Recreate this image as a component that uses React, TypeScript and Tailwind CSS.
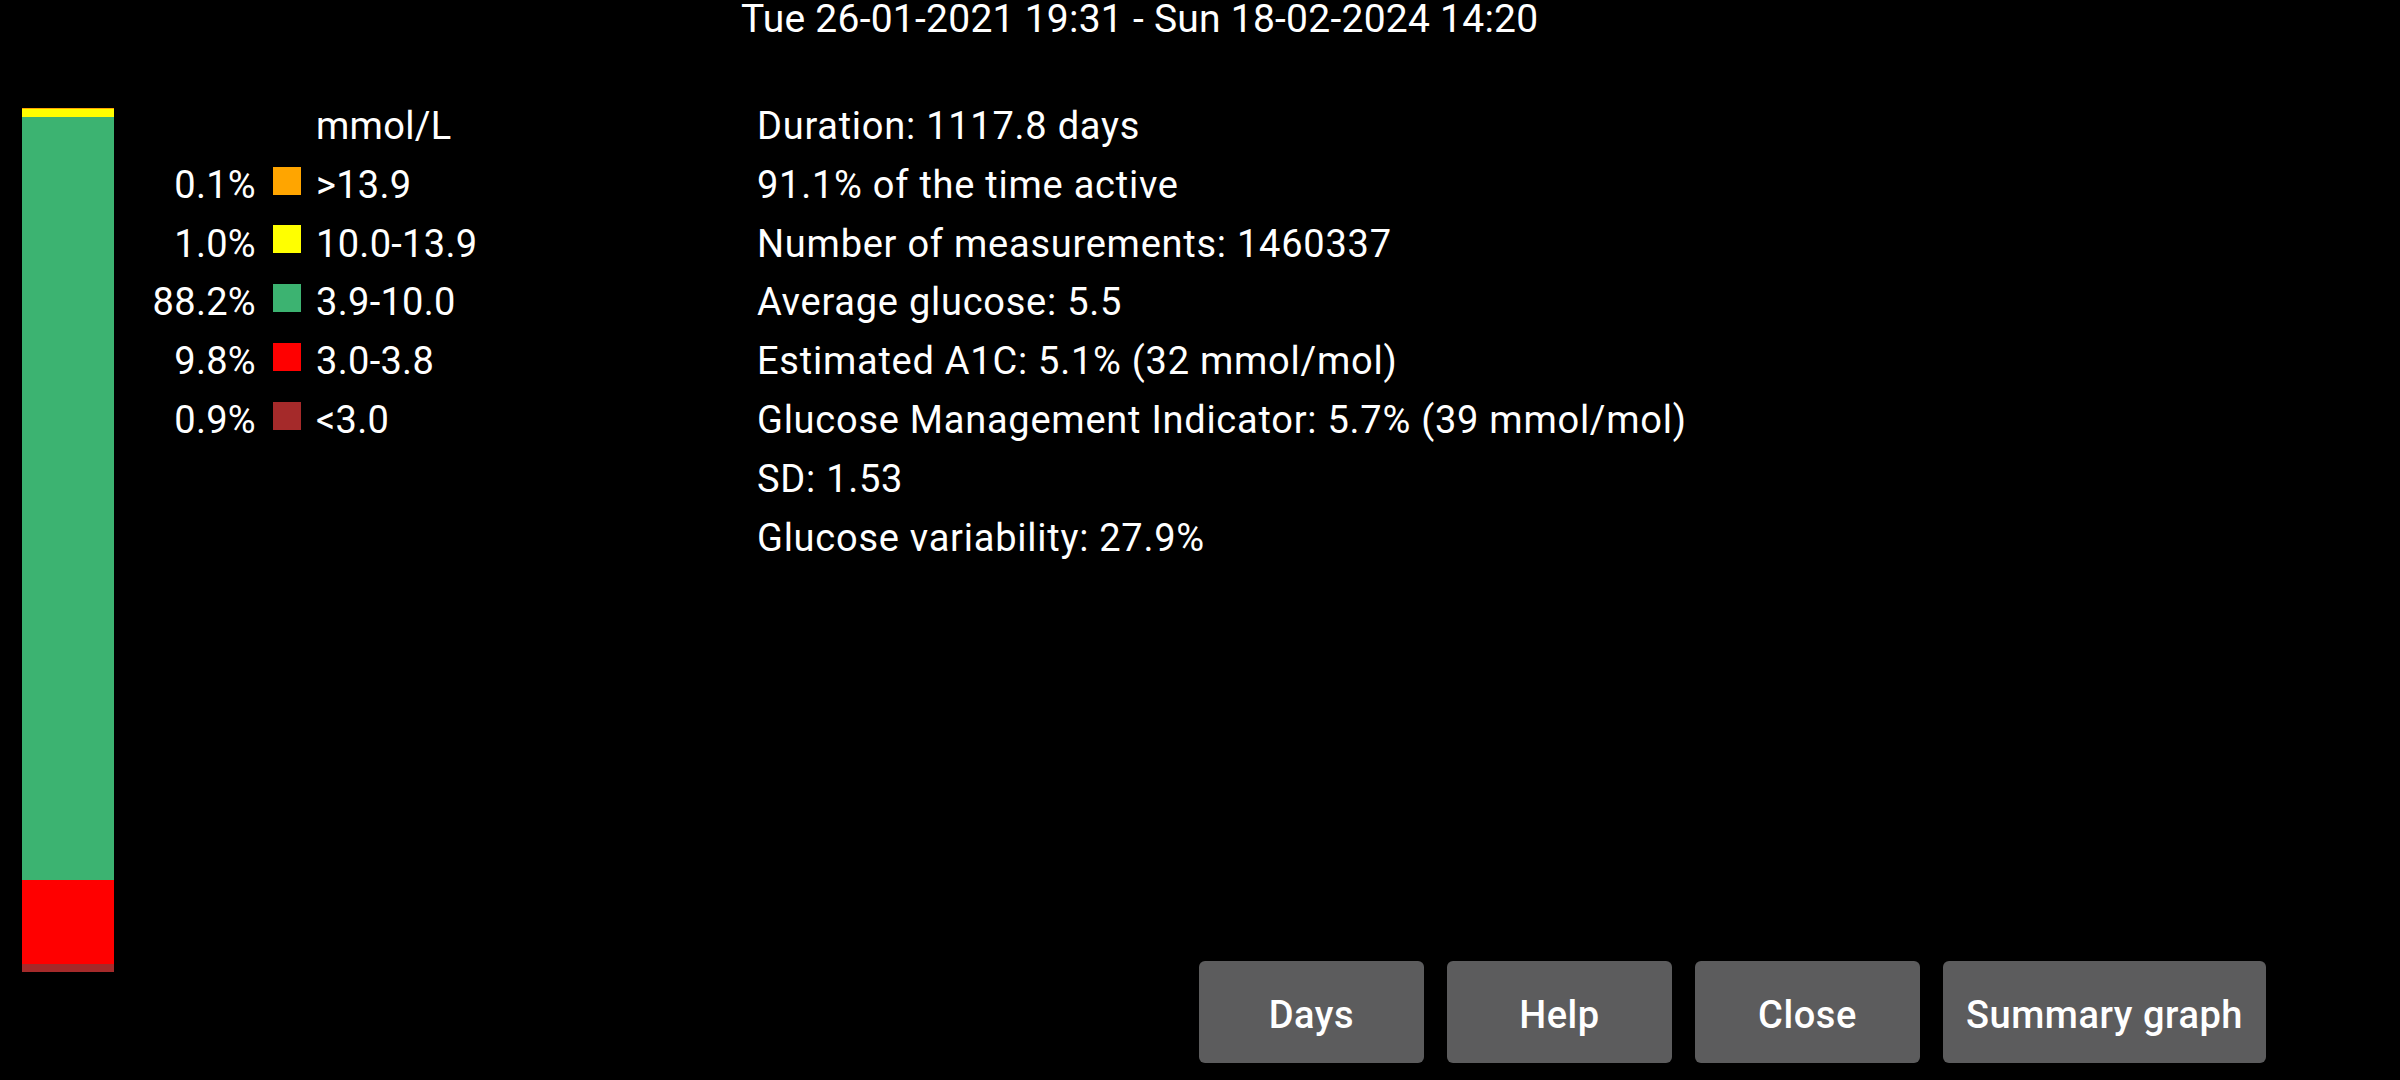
const ranges = [
  { pct: 0.1, label: ">13.9", color: "bg-[#ffa500]" },
  { pct: 1.0, label: "10.0-13.9", color: "bg-[#ffff00]" },
  { pct: 88.2, label: "3.9-10.0", color: "bg-[#3cb371]" },
  { pct: 9.8, label: "3.0-3.8", color: "bg-[#ff0000]" },
  { pct: 0.9, label: "<3.0", color: "bg-[#a52a2a]" },
];

const stats = [
  "Duration: 1117.8 days",
  "91.1% of the time active",
  "Number of measurements: 1460337",
  "Average glucose: 5.5",
  "Estimated A1C: 5.1% (32 mmol/mol)",
  "Glucose Management Indicator: 5.7% (39 mmol/mol)",
  "SD: 1.53",
  "Glucose variability: 27.9%",
];

const buttons = ["Days", "Help", "Close", "Summary graph"];

export default function App() {
  return (
    <div className="flex h-[1080px] w-[2400px] flex-col overflow-hidden bg-black text-white font-['Roboto','Liberation_Sans',sans-serif]">
      {/* period */}
      <div className="pl-[741px] pt-[2px] text-[39px] leading-[34px] tracking-[0.25px]">
        Tue 26-01-2021 19:31 - Sun 18-02-2024 14:20
      </div>

      <div className="flex flex-1">
        {/* stacked percentage bar */}
        <div className="ml-[22px] mt-[72px] flex h-[864px] w-[92px] flex-col">
          {ranges.map((r) => (
            <div key={r.label} className={r.color} style={{ height: `${r.pct}%` }} />
          ))}
        </div>

        <div className="flex flex-1 flex-col">
          <div className="mt-[61px] flex text-[38px] leading-[58.8px]">
            {/* legend */}
            <div className="w-[643px] tracking-[0.3px]">
              <div className="pl-[202px]">mmol/L</div>
              {ranges.map((r) => (
                <div key={r.label} className="flex items-center">
                  <span className="w-[142px] text-right">{r.pct.toFixed(1)}%</span>
                  <span className={`mb-[9px] ml-[17px] mr-[15px] h-[28px] w-[28px] ${r.color}`} />
                  <span>{r.label}</span>
                </div>
              ))}
            </div>

            {/* statistics */}
            <div className="tracking-[0.75px]">
              {stats.map((s) => (
                <div key={s}>{s}</div>
              ))}
            </div>
          </div>

          <div className="mt-auto mb-[17px] mr-[134px] flex justify-end gap-[23px]">
            {buttons.map((b) => (
              <button
                key={b}
                className="h-[102px] min-w-[225px] rounded-[6px] bg-[#5c5c5d] px-[23px] pt-[6px] text-[38px] font-medium tracking-[0.55px] text-white"
              >
                {b}
              </button>
            ))}
          </div>
        </div>
      </div>
    </div>
  );
}
